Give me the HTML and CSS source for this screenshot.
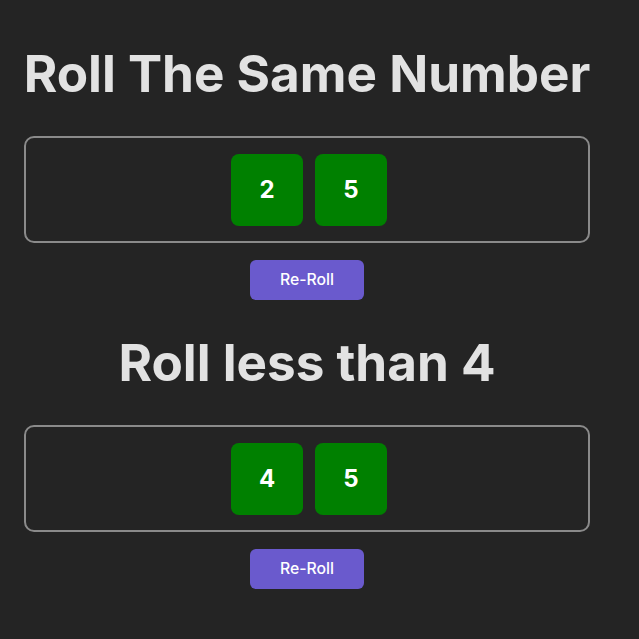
FILE: index.html
```html
<!DOCTYPE html>
<html lang="en">
<head>
<meta charset="UTF-8">
<title>Dice</title>
<link rel="stylesheet" href="styles.css">
</head>
<body>
<div class="app">
  <section class="game">
    <h1 class="title">Roll The Same Number</h1>
    <div class="board">
      <div class="die">2</div>
      <div class="die">5</div>
    </div>
    <button class="reroll">Re-Roll</button>
  </section>
  <section class="game">
    <h1 class="title">Roll less than 4</h1>
    <div class="board">
      <div class="die">4</div>
      <div class="die">5</div>
    </div>
    <button class="reroll">Re-Roll</button>
  </section>
</div>
</body>
</html>
```
FILE: styles.css
```css
html, body {
  margin: 0;
  padding: 0;
  background: #242424;
}
body {
  font-family: Inter, "Noto Sans", sans-serif;
  color: rgba(255, 255, 255, 0.87);
  -webkit-font-smoothing: antialiased;
}
.app {
  width: 566px;
  margin-left: 24px;
  padding-top: 11px;
}
.game {
  display: flex;
  flex-direction: column;
  align-items: center;
}
.title {
  font-size: 51.2px;
  line-height: 1.1;
  font-weight: 700;
  margin: 34.3px 0;
  text-align: center;
  white-space: nowrap;
}
.board {
  box-sizing: border-box;
  width: 566px;
  display: flex;
  justify-content: center;
  gap: 12px;
  border: 2px solid #8a8a8a;
  border-radius: 10px;
  padding: 16px 0 15px 4px;
}
.die {
  width: 72px;
  height: 72px;
  background: #008000;
  border-radius: 8px;
  color: #fff;
  font-size: 24px;
  font-weight: 700;
  display: flex;
  align-items: center;
  justify-content: center;
}
.reroll {
  margin-top: 17px;
  width: 114px;
  height: 40px;
  background: #6a5acd;
  color: #fff;
  border: none;
  border-radius: 6px;
  font-family: Inter, "Noto Sans", sans-serif;
  font-size: 15.75px;
  font-weight: 500;
  cursor: pointer;
}
```
